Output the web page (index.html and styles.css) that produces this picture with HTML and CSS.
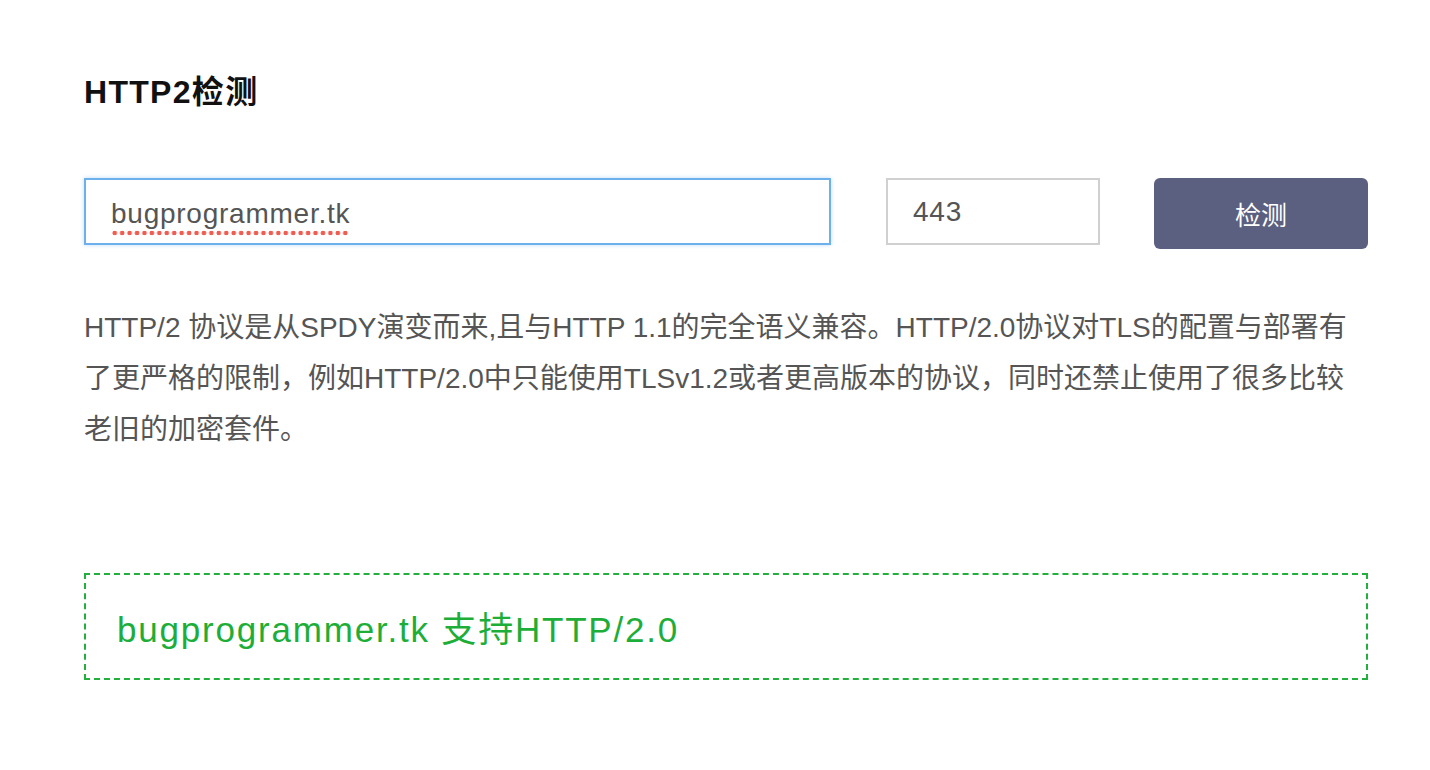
FILE: index.html
```html
<!DOCTYPE html>
<html lang="zh-CN">
<head>
<meta charset="utf-8">
<title>HTTP2检测</title>
<link rel="stylesheet" href="styles.css">
</head>
<body>
<main class="page">
  <h1 class="title">HTTP2检测</h1>
  <div class="form">
    <div class="field field-host"><span class="misspelled">bugprogrammer.tk</span></div>
    <div class="field field-port">443</div>
    <button class="btn" type="button">检测</button>
  </div>
  <p class="desc">HTTP/2 协议是从SPDY演变而来,且与HTTP 1.1的完全语义兼容。HTTP/2.0协议对TLS的配置与部署有<br>了更严格的限制，例如HTTP/2.0中只能使用TLSv1.2或者更高版本的协议，同时还禁止使用了很多比较<br>老旧的加密套件。</p>
  <div class="result">bugprogrammer.tk 支持HTTP/2.0</div>
</main>
</body>
</html>
```
FILE: styles.css
```css
html, body {
  margin: 0;
  padding: 0;
  background: #ffffff;
}
body {
  font-family: "Liberation Sans", "Noto Sans CJK SC", sans-serif;
  color: #333;
}
.page {
  width: 1284px;
  padding: 72px 0 0 84px;
}
.title {
  margin: 0;
  font-size: 32px;
  font-weight: bold;
  color: #111;
  line-height: 40px;
  letter-spacing: 1.3px;
}
.form {
  margin-top: 66px;
  display: flex;
  align-items: flex-start;
}
.field {
  box-sizing: border-box;
  height: 67px;
  display: flex;
  align-items: center;
  font-size: 28px;
  letter-spacing: 0.75px;
  color: #555;
  background: #fff;
}
.field-host {
  width: 747px;
  border: 2px solid #6cb1ec;
  box-shadow: 0 0 4px rgba(108, 177, 236, 0.45);
  padding-left: 25px;
}
.misspelled {
  padding-bottom: 6px;
  background-image: radial-gradient(circle, #ef5d52 2px, transparent 2.6px);
  background-size: 7.45px 6px;
  background-repeat: repeat-x;
  background-position: 0 100%;
  position: relative;
  top: 5px;
}
.field-port {
  width: 214px;
  margin-left: 55px;
  border: 2px solid #d0d0d0;
  padding-left: 25px;
}
.btn {
  width: 214px;
  height: 71px;
  margin-left: 54px;
  border: none;
  border-radius: 6px;
  background: #5c6080;
  color: #fff;
  font-family: inherit;
  font-size: 26px;
  padding: 0;
}
.desc {
  margin: 53px 0 0;
  font-size: 28px;
  line-height: 51px;
  color: #555;
}
.result {
  box-sizing: border-box;
  margin-top: 118px;
  height: 107px;
  border: 2px dashed #22b03c;
  display: flex;
  align-items: center;
  padding-left: 31px;
  font-size: 35px;
  letter-spacing: 1.8px;
  color: #1cae38;
}
```
